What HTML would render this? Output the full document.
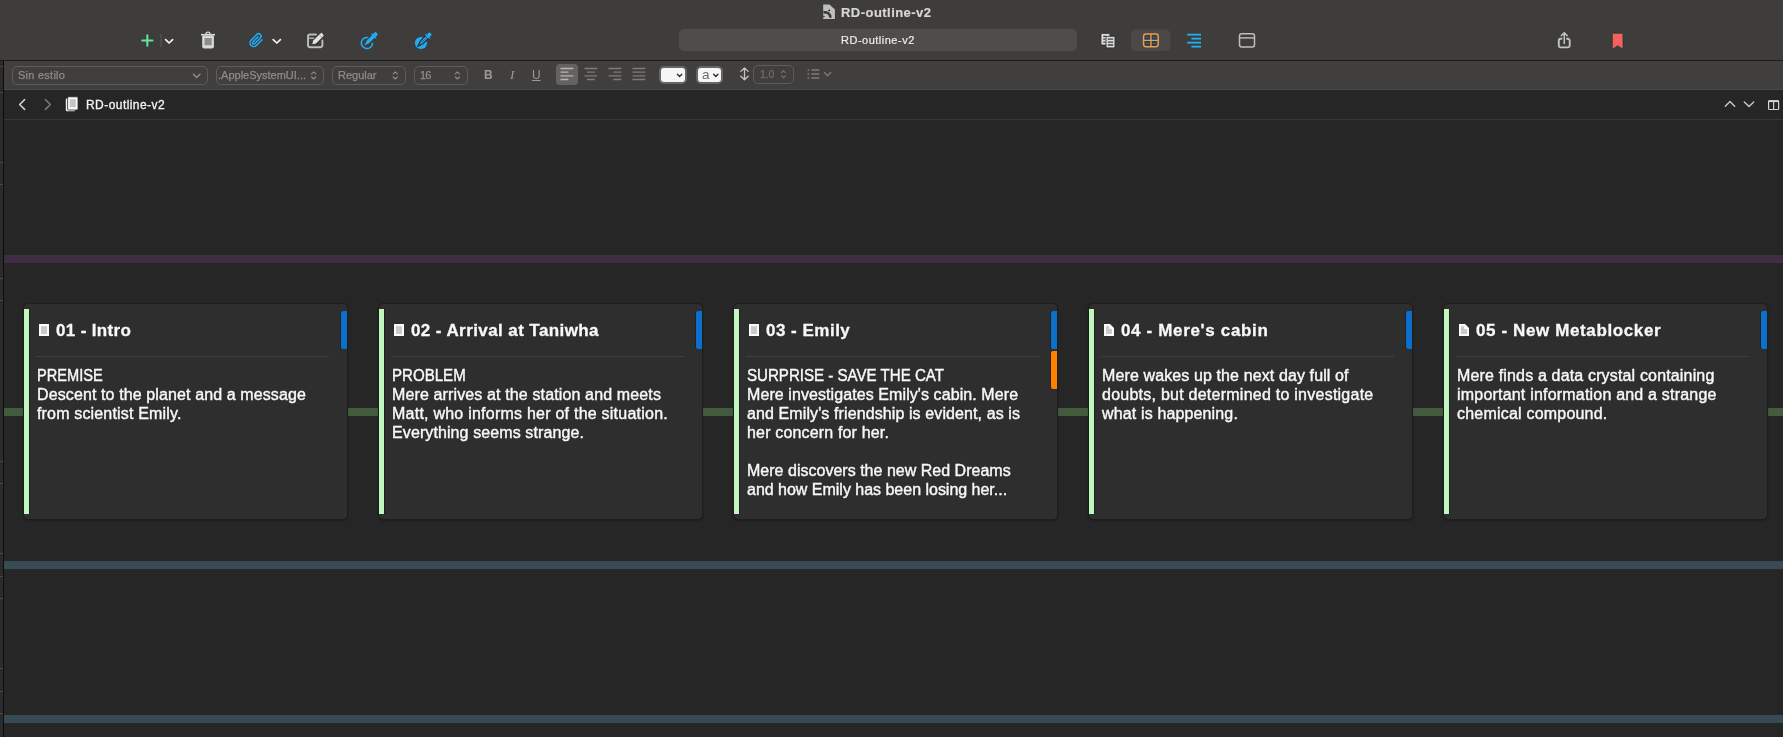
<!DOCTYPE html>
<html lang="en">
<head>
<meta charset="utf-8">
<title>RD-outline-v2</title>
<style>
*{box-sizing:border-box;margin:0;padding:0}
html,body{width:1783px;height:737px;overflow:hidden;background:#262626;font-family:"Liberation Sans",sans-serif;color:#f2f2f2;-webkit-font-smoothing:antialiased}
.card .txt{-webkit-text-stroke:.4px #f8f8f8}
.card .ttl{-webkit-text-stroke:.3px #f8f8f8}
.card,.title,#search,.fb,.gs,.box span,.wbox span{will-change:transform}
.abs{position:absolute}
#toolbar{position:absolute;left:0;top:0;width:1783px;height:60px;background:#3e3d3b}
#tb-line{position:absolute;left:0;top:60px;width:1783px;height:1px;background:#1c1c1c}
#fmt{position:absolute;left:4px;top:61px;width:1779px;height:28px;background:#403f3d}
#fmt-line{position:absolute;left:4px;top:89px;width:1779px;height:1px;background:#4a4948}
#leftstrip{position:absolute;left:0;top:61px;width:3px;height:676px;background:#2b2b2b}
#leftline{position:absolute;left:3px;top:61px;width:1px;height:676px;background:#0c0c0c}
#path{position:absolute;left:4px;top:90px;width:1779px;height:29px;background:#262626}
#path-line{position:absolute;left:4px;top:119px;width:1779px;height:1px;background:#383838}
.tick{position:absolute;left:0;width:3px;height:1px;background:#484848}
.band{position:absolute;left:4px;width:1779px;height:8px}
.title{position:absolute;top:5px;left:841px;-webkit-text-stroke:.2px;letter-spacing:.46px;font-weight:bold;font-size:13px;line-height:16px;color:#d6d6d6;white-space:nowrap}
#search{position:absolute;left:679px;top:29px;width:398px;height:22px;border-radius:5px;background:#4e4d4b}
#search span{position:absolute;left:162px;top:4px;-webkit-text-stroke:.2px;letter-spacing:.5px;font-size:11px;line-height:14px;color:#ececec;white-space:nowrap}
.sel{position:absolute;border-radius:5px;background:#4e4d4b}
.box{position:absolute;top:66px;height:19px;border:1px solid #5e5d5b;border-radius:5px;font-size:11px;line-height:17px;color:#8c8c8c;white-space:nowrap}
.box span{position:absolute;top:0;-webkit-text-stroke:.25px}
.fb{position:absolute;font-size:12px;line-height:14px;color:#9a9a9a;white-space:nowrap}
.wbox{position:absolute;top:66.3px;width:27.2px;height:18.2px;background:#f6f6f6;border:2px solid #676664;border-radius:5px}
.card{position:absolute;top:303px;width:325px;height:217px;background:#2e2e2e;border:1px solid #1d1d1d;border-radius:5px;box-shadow:0 1px 2px rgba(0,0,0,.25)}
.card .gbar{position:absolute;left:0;top:5px;width:5px;height:205px;background:#c2f6c1;box-shadow:1px 0 0 #1f1f1f}
.card .lab{position:absolute;right:0;width:6px;border-radius:2px 0 0 2px;box-shadow:-1px 0 0 rgba(24,24,24,.55)}
.card .lab.b{top:7px;height:38px;background:#0b6fcc}
.card .lab.o{top:47px;height:38px;background:#ff8000}
.card .ttl{position:absolute;left:32px;top:16px;font-weight:bold;font-size:17px;line-height:22px;white-space:nowrap;color:#f8f8f8}
.card .ico{position:absolute;left:14px;top:19px}
.card .hr{position:absolute;left:12px;top:52px;width:293px;height:1px;background:#3f3f3f}
.card .txt{position:absolute;left:13px;top:62px;width:300px;font-size:16px;line-height:19px;color:#f8f8f8;white-space:nowrap}
.card .txt .l{display:block;height:19px}
</style>
</head>
<body>
<div id="toolbar"></div>
<div id="tb-line"></div>
<div id="fmt"></div>
<div id="fmt-line"></div>
<div id="leftstrip"></div>
<div id="leftline"></div>
<div class="tick" style="top:66px"></div><div class="tick" style="top:92px"></div><div class="tick" style="top:162px"></div><div class="tick" style="top:184px"></div><div class="tick" style="top:278px"></div><div class="tick" style="top:300px"></div><div class="tick" style="top:461px"></div><div class="tick" style="top:483px"></div><div class="tick" style="top:553px"></div><div class="tick" style="top:576px"></div><div class="tick" style="top:598px"></div><div class="tick" style="top:668px"></div><div class="tick" style="top:691px"></div><div class="tick" style="top:713px"></div>
<div id="path"></div>
<div id="path-line"></div>

<!-- TITLE -->
<div class="title">RD-outline-v2</div>
<div id="search"><span>RD-outline-v2</span></div>

<!-- TOOLBAR ICONS -->
<svg class="abs" style="left:0;top:0" width="1783" height="60" viewBox="0 0 1783 60" fill="none">

<!-- plus -->
<path d="M142.2 40.5H152.5M147.35 35.3V45.7" stroke="#5fe69c" stroke-width="2" stroke-linecap="round"/>
<path d="M161 34V47" stroke="#5b5a58" stroke-width="1"/>
<path d="M165.6 39.6L169.1 43L172.6 39.6" stroke="#f4f4f4" stroke-width="1.7" stroke-linecap="round" stroke-linejoin="round"/>
<!-- trash -->
<path d="M206 34.2a2 2 0 0 1 4 0" stroke="#dadada" stroke-width="1.3"/>
<path d="M201 34.7H215" stroke="#dadada" stroke-width="1.6"/>
<path d="M202.2 35.5H213.9V46.6a2 2 0 0 1 -2 2H204.2a2 2 0 0 1 -2 -2Z" fill="#dadada"/>
<rect x="204.5" y="38" width="7.2" height="7.2" fill="#8d8d8c"/>
<!-- paperclip -->
<g transform="translate(248.75 32.9) scale(0.62)" stroke="#1fadf6" stroke-width="2.4" stroke-linecap="round" stroke-linejoin="round"><path d="M21.44 11.05l-9.19 9.19a6 6 0 0 1-8.49-8.49l9.19-9.19a4 4 0 0 1 5.66 5.66l-9.2 9.19a2 2 0 0 1-2.83-2.83l8.49-8.48"/></g>
<path d="M273.2 39.6L276.8 43L280.4 39.6" stroke="#f4f4f4" stroke-width="1.7" stroke-linecap="round" stroke-linejoin="round"/>
<!-- compose -->
<path d="M316 34.5H310.2a2.2 2.2 0 0 0 -2.2 2.2V45a2.2 2.2 0 0 0 2.2 2.2H320.2a2.2 2.2 0 0 0 2.2 -2.2V40.5" stroke="#bdbdbc" stroke-width="1.9" stroke-linecap="round"/>
<path d="M308.5 38.2H314" stroke="#bdbdbc" stroke-width="1.3"/>
<g transform="translate(311.7 44.9) rotate(-45)"><path d="M0 0L3.6 -2.3H14.3a1.6 1.6 0 0 1 1.6 1.6V0.7a1.6 1.6 0 0 1 -1.6 1.6H3.6Z" fill="#e4e4e4" stroke="#3e3d3b" stroke-width="0.9"/><path d="M12.6 -2.3V2.3" stroke="#9a9a99" stroke-width="0.8"/></g>
<!-- eyedropper 1 -->
<path d="M367.6 37.45A5.6 5.6 0 1 0 372.5 43.3" stroke="#1fadf6" stroke-width="1.5" stroke-linecap="round"/>
<g transform="translate(370.3 39.5) rotate(45)" fill="#1fadf6"><path d="M-1.7 -5.2H1.7V3.5L0 8.6L-1.7 3.5Z"/><rect x="-3.3" y="-5.6" width="6.6" height="1.3" rx="0.5"/><rect x="-2" y="-9.3" width="4" height="4" rx="1.6"/></g>
<!-- eyedropper 2 -->
<circle cx="421" cy="43" r="6.1" fill="#1fadf6"/>
<g transform="translate(424.2 39.9) rotate(45)" fill="#1fadf6"><path d="M-1.9 -5.2H1.9V3.5L0 8.8L-1.9 3.5Z" stroke="#332d28" stroke-width="1.3"/><rect x="-3.3" y="-5.6" width="6.6" height="1.3" rx="0.5"/><rect x="-2" y="-9.3" width="4" height="4" rx="1.6"/><path d="M0 -3.5V4.5" stroke="#332d28" stroke-width="0.9" stroke-dasharray="1 0.9"/></g>
<!-- title icon -->
<path d="M823.2 4.4H829.4L834.9 9.6V19H823.2Z" fill="#bfbfbe"/>
<path d="M823.4 12.4C827 11.9 830.4 13.6 830.4 17.8" stroke="#3a3937" stroke-width="2.5" fill="none"/>
<path d="M823.2 15.6L825.2 16.6L823.2 17.6Z" fill="#3e3d3b"/>
<circle cx="829.3" cy="10.4" r="0.85" fill="#0e0e0e"/>
<!-- docs -->
<rect x="1101" y="33.4" width="9" height="11.6" rx="1.4" fill="#dcdcdc" stroke="#2c2b2a" stroke-width="0.8"/>
<path d="M1103.2 36.3H1106.4M1103.2 39.2H1105.4M1103.2 42.1H1105.4" stroke="#3e3d3b" stroke-width="1.2"/>
<rect x="1106" y="36.3" width="9" height="11.6" rx="1.4" fill="#dcdcdc" stroke="#2c2b2a" stroke-width="0.9"/>
<path d="M1107.8 39.2H1113.2M1107.8 42.1H1113.2M1107.8 45H1113.2" stroke="#3e3d3b" stroke-width="1.3"/>
<!-- grid (selected) -->
<rect x="1131" y="29.5" width="39.5" height="21.5" rx="5" fill="#4a4947"/>
<rect x="1143.6" y="34" width="14.6" height="12.7" rx="2.4" fill="#233f5b" stroke="#f69b40" stroke-width="1.5"/>
<path d="M1150.9 34V46.7M1143.6 40.35H1158.2" stroke="#f69b40" stroke-width="1.4"/>
<path d="M1145.4 37.2H1149.3M1152.5 37.2H1156.4M1145.4 43.5H1149.3M1152.5 43.5H1156.4" stroke="#f69b40" stroke-opacity=".55" stroke-width="0.6"/>
<!-- outline lines -->
<path d="M1187.2 34.7H1201M1191.4 38.6H1201M1187.2 42.7H1201M1191.4 46.7H1201" stroke="#1fb4f8" stroke-width="1.8"/>
<!-- window -->
<rect x="1239.5" y="33.7" width="15" height="13.2" rx="2.2" stroke="#bebebd" stroke-width="1.5"/>
<path d="M1239.5 37.9H1254.5" stroke="#bebebd" stroke-width="1.4"/>
<!-- share -->
<path d="M1561.5 38.8H1560.6a1.8 1.8 0 0 0 -1.8 1.8V45.6a1.8 1.8 0 0 0 1.8 1.8H1567.9a1.8 1.8 0 0 0 1.8 -1.8V40.6a1.8 1.8 0 0 0 -1.8 -1.8H1567" stroke="#c2c2c1" stroke-width="1.9" stroke-linecap="round"/>
<path d="M1564.25 43.5V33.2M1561.4 35.6L1564.25 32.7L1567.1 35.6" stroke="#c2c2c1" stroke-width="1.5" stroke-linecap="round" stroke-linejoin="round"/>
<!-- bookmark -->
<path d="M1612.3 33.2H1623V49.3L1617.65 45.8L1612.3 49.3Z" fill="#f5625c" stroke="#23393c" stroke-width="0.8" stroke-linejoin="round"/>

</svg>

<!-- FORMAT BAR -->
<div class="box" style="left:12px;width:196px"><span style="left:5px;letter-spacing:.25px">Sin estilo</span></div>
<div class="box" style="left:216px;width:108px"><span style="left:1px">.AppleSystemUI...</span></div>
<div class="box" style="left:332px;width:74px"><span style="left:5px">Regular</span></div>
<div class="box" style="left:414px;width:54px"><span style="left:5px;letter-spacing:-.8px">16</span></div>
<div class="fb" style="left:484px;top:68px;font-weight:bold">B</div>
<div class="fb" style="left:510px;top:68px;font-style:italic;font-family:'Liberation Serif',serif;font-size:13px">I</div>
<div class="fb" style="left:532px;top:68px;text-decoration:underline;text-underline-offset:1px">U</div>
<div class="sel" style="left:556px;top:64px;width:22px;height:21px;background:#646361;border-radius:4px"></div>
<div class="wbox" style="left:659.4px"></div>
<div class="wbox" style="left:695.6px"><span style="position:absolute;left:4.8px;top:-1.2px;font-size:13.5px;line-height:15px;color:#6a6a6a">a</span></div>
<div class="box" style="left:753px;top:65.3px;width:41px;color:#6c6c6c"><span style="left:5.5px;top:-.4px;font-size:10.5px;letter-spacing:-.1px">1.0</span></div>
<svg class="abs" style="left:0;top:60px" width="1783" height="30" viewBox="0 60 1783 30" fill="none">
<path d="M193.4 74.2L196.7 77.5L200 74.2" stroke="#8c8c8c" stroke-width="1.4" stroke-linecap="round" stroke-linejoin="round"/>
<path d="M311.6 73.9L313.7 71.9L315.8 73.9M311.6 77L313.7 79L315.8 77" stroke="#8c8c8c" stroke-width="1.15" stroke-linecap="round" stroke-linejoin="round"/>
<path d="M393.2 73.9L395.3 71.9L397.4 73.9M393.2 77L395.3 79L397.4 77" stroke="#8c8c8c" stroke-width="1.15" stroke-linecap="round" stroke-linejoin="round"/>
<path d="M455.3 73.9L457.4 71.9L459.5 73.9M455.3 77L457.4 79L459.5 77" stroke="#8c8c8c" stroke-width="1.15" stroke-linecap="round" stroke-linejoin="round"/>
<path d="M781.4 72.7L783.5 70.7L785.6 72.7M781.4 75.8L783.5 77.8L785.6 75.8" stroke="#6c6c6c" stroke-width="1.2" stroke-linecap="round" stroke-linejoin="round"/>
<path d="M560.5 68.5H573.3M560.5 72.2H568.4M560.5 75.8H573.3M560.5 79.5H568.4" stroke="#b6b6b5" stroke-width="1.3"/>
<path d="M584.5 68.5H597.3M586.9 72.2H594.9M584.5 75.8H597.3M586.9 79.5H594.9" stroke="#7c7c7b" stroke-width="1.3"/>
<path d="M608.5 68.5H621.3M613.4 72.2H621.3M608.5 75.8H621.3M613.4 79.5H621.3" stroke="#7c7c7b" stroke-width="1.3"/>
<path d="M632.5 68.5H645.3M632.5 72.2H645.3M632.5 75.8H645.3M632.5 79.5H645.3" stroke="#7c7c7b" stroke-width="1.3"/>
<path d="M677.4 74.3L679.6 76.5L681.8 74.3" stroke="#2a2a2a" stroke-width="1.3" stroke-linecap="round" stroke-linejoin="round"/>
<path d="M713.6 74.3L715.8 76.5L718 74.3" stroke="#2a2a2a" stroke-width="1.3" stroke-linecap="round" stroke-linejoin="round"/>
<path d="M744.5 68.3V79.4M740.8 71.4L744.5 67.9L748.2 71.4M740.8 76.3L744.5 79.8L748.2 76.3" stroke="#c6c6c5" stroke-width="1.3" stroke-linecap="round" stroke-linejoin="round"/>
<path d="M811.3 70H819.3M811.3 74H819.3M811.3 78H819.3" stroke="#7c7c7b" stroke-width="1.4"/>
<path d="M807.6 70H809.2M807.6 74H809.2M807.6 78H809.2" stroke="#7c7c7b" stroke-width="1.5"/>
<path d="M824.4 72.5L827.6 75.7L830.8 72.5" stroke="#7c7c7b" stroke-width="1.3" stroke-linecap="round" stroke-linejoin="round"/>

</svg>

<!-- PATH BAR -->
<div class="abs gs" style="left:86px;top:98px;font-size:12px;line-height:15px;letter-spacing:.44px;color:#f4f4f4;-webkit-text-stroke:.3px;white-space:nowrap">RD-outline-v2</div>
<svg class="abs" style="left:0;top:90px" width="1783" height="30" viewBox="0 90 1783 30" fill="none">
<path d="M24.6 99.6L19.6 104.5L24.6 109.4" stroke="#d2d2d2" stroke-width="1.5" stroke-linecap="round" stroke-linejoin="round"/>
<path d="M45.4 99.6L50.4 104.5L45.4 109.4" stroke="#7a7a7a" stroke-width="1.5" stroke-linecap="round" stroke-linejoin="round"/>
<rect x="65.8" y="98.6" width="9.4" height="12.6" rx="1" fill="#f4f4f4"/>
<rect x="67.6" y="96.8" width="10.4" height="13.2" rx="1" fill="#fbfbfb" stroke="#262626" stroke-width="0.8"/>
<rect x="69.8" y="99.2" width="6" height="8" fill="#c4c4c4"/>
<path d="M1725.3 106.2L1730 101.6L1734.7 106.2" stroke="#cacaca" stroke-width="1.4" stroke-linecap="round" stroke-linejoin="round"/>
<path d="M1744.3 102L1749 106.6L1753.7 102" stroke="#cacaca" stroke-width="1.4" stroke-linecap="round" stroke-linejoin="round"/>
<rect x="1768.6" y="100.8" width="10" height="8.7" rx="0.8" stroke="#d4d4d4" stroke-width="1.2"/>
<path d="M1768.6 101.2H1778.6" stroke="#d4d4d4" stroke-width="1.8"/><path d="M1773.6 100.8V109.5" stroke="#d4d4d4" stroke-width="1.2"/>

</svg>

<!-- BANDS -->
<div class="band" style="top:255px;background:#3f2d43"></div>
<div class="band" style="top:408px;background:#435c3e"></div>
<div class="band" style="top:561px;background:#384b54"></div>
<div class="band" style="top:715px;background:#384b54"></div>

<!-- CARDS -->
<div class="card" style="left:23px">
  <div class="gbar"></div><div class="lab b"></div>
  <svg class="ico" width="12" height="14" viewBox="0 0 12 14"><rect x="1" y="1" width="10" height="12" fill="#fbfbfb"/><rect x="3" y="3.2" width="6" height="7.8" fill="#c9c9c9"/></svg>
  <div class="ttl" style="letter-spacing:0.340px">01 - Intro</div>
  <div class="hr"></div>
  <div class="txt"><span class="l" style="width:max-content;transform-origin:0 0;transform:scaleX(0.913)">PREMISE</span><span class="l" style="letter-spacing:0.113px">Descent to the planet and a message</span><span class="l" style="letter-spacing:0.164px">from scientist Emily.</span></div>
</div>
<div class="card" style="left:378px">
  <div class="gbar"></div><div class="lab b"></div>
  <svg class="ico" width="12" height="14" viewBox="0 0 12 14"><rect x="1" y="1" width="10" height="12" fill="#fbfbfb"/><rect x="3" y="3.2" width="6" height="7.8" fill="#c9c9c9"/></svg>
  <div class="ttl" style="letter-spacing:0.410px">02 - Arrival at Taniwha</div>
  <div class="hr"></div>
  <div class="txt"><span class="l" style="width:max-content;transform-origin:0 0;transform:scaleX(0.942)">PROBLEM</span><span class="l" style="letter-spacing:0.132px">Mere arrives at the station and meets</span><span class="l" style="letter-spacing:0.236px">Matt, who informs her of the situation.</span><span class="l" style="letter-spacing:0.103px">Everything seems strange.</span></div>
</div>
<div class="card" style="left:733px">
  <div class="gbar"></div><div class="lab b"></div><div class="lab o"></div>
  <svg class="ico" width="12" height="14" viewBox="0 0 12 14"><rect x="1" y="1" width="10" height="12" fill="#fbfbfb"/><rect x="3" y="3.2" width="6" height="7.8" fill="#c9c9c9"/></svg>
  <div class="ttl" style="letter-spacing:0.492px">03 - Emily</div>
  <div class="hr"></div>
  <div class="txt"><span class="l" style="width:max-content;transform-origin:0 0;transform:scaleX(0.9429)">SURPRISE - SAVE THE CAT</span><span class="l" style="letter-spacing:0.083px">Mere investigates Emily's cabin. Mere</span><span class="l" style="letter-spacing:0.104px">and Emily's friendship is evident, as is</span><span class="l" style="letter-spacing:0.167px">her concern for her.</span><span class="l">&nbsp;</span><span class="l" style="letter-spacing:0.015px">Mere discovers the new Red Dreams</span><span class="l" style="letter-spacing:-0.014px">and how Emily has been losing her...</span></div>
</div>
<div class="card" style="left:1088px">
  <div class="gbar"></div><div class="lab b"></div>
  <svg class="ico" width="12" height="14" viewBox="0 0 12 14"><path d="M1 1H7L11 5V13H1Z" fill="#fbfbfb"/><path d="M3 3.2H6V6H9V11H3Z" fill="#c9c9c9"/></svg>
  <div class="ttl" style="letter-spacing:0.657px">04 - Mere's cabin</div>
  <div class="hr"></div>
  <div class="txt"><span class="l" style="letter-spacing:0.112px">Mere wakes up the next day full of</span><span class="l" style="letter-spacing:0.246px">doubts, but determined to investigate</span><span class="l" style="letter-spacing:0.142px">what is happening.</span></div>
</div>
<div class="card" style="left:1443px">
  <div class="gbar"></div><div class="lab b"></div>
  <svg class="ico" width="12" height="14" viewBox="0 0 12 14"><path d="M1 1H7L11 5V13H1Z" fill="#fbfbfb"/><path d="M3 3.2H6V6H9V11H3Z" fill="#c9c9c9"/></svg>
  <div class="ttl" style="letter-spacing:0.615px">05 - New Metablocker</div>
  <div class="hr"></div>
  <div class="txt"><span class="l" style="letter-spacing:0.161px">Mere finds a data crystal containing</span><span class="l" style="letter-spacing:0.200px">important information and a strange</span><span class="l" style="letter-spacing:0.208px">chemical compound.</span></div>
</div>
</body>
</html>
